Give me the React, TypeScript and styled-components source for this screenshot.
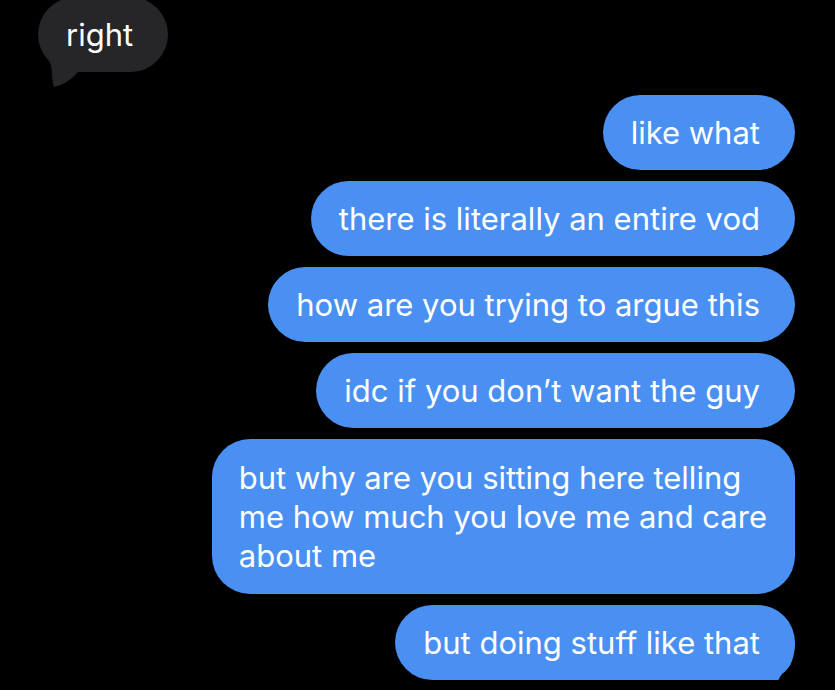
import styled, { createGlobalStyle } from 'styled-components';

const GlobalStyle = createGlobalStyle`
  html, body {
    margin: 0;
    padding: 0;
    background: #000;
    overflow: hidden;
  }
  body {
    font-family: Inter, "Noto Sans", sans-serif;
  }
`;

const BLUE = '#4a8ff2';
const GRAY = '#262628';

const sent = [
  ['like what'],
  ['there is literally an entire vod'],
  ['how are you trying to argue this'],
  ['idc if you don\u2019t want the guy'],
  ['but why are you sitting here telling', 'me how much you love me and care', 'about me'],
  ['but doing stuff like that'],
];

const App = () => {
  return (
    <>
      <GlobalStyle />
      <Thread>
        <ReceivedRow>
          <Bubble $kind="received" $multi={false}>
            <Text>right</Text>
            <ReceivedTail width="50" height="95" viewBox="0 0 50 95">
              <path
                d="M6 46 C9 58 14 68 14 76 C14 82 15 87 16 90 C25 88 33 83 40 75 L30 60 Z"
                fill={GRAY}
              />
            </ReceivedTail>
          </Bubble>
        </ReceivedRow>
        <SentGroup>
          {sent.map((lines, i) => (
            <Bubble key={i} $kind="sent" $multi={lines.length > 1}>
              <Text>
                {lines.map((l, j) => (
                  <span key={j}>
                    {l}
                    {j < lines.length - 1 && <br />}
                  </span>
                ))}
              </Text>
              {i === sent.length - 1 && (
                <SentTail width="55" height="70" viewBox="0 0 55 70">
                  <path
                    d="M20 1 L55 1 C55 17 51 28 42 34 C37 40 36 47 38 56 L32 61 C26 53 20 45 8 41 L0 41 Z"
                    fill={BLUE}
                  />
                </SentTail>
              )}
            </Bubble>
          ))}
        </SentGroup>
      </Thread>
    </>
  );
};

const Thread = styled.div`
  display: flex;
  flex-direction: column;
  padding: 0 40px 0 38px;
  gap: 23px;
`;

const ReceivedRow = styled.div`
  display: flex;
  justify-content: flex-start;
  margin-top: -3px;
`;

const SentGroup = styled.div`
  display: flex;
  flex-direction: column;
  align-items: flex-end;
  gap: 11px;
`;

const Bubble = styled.div<{ $kind: 'sent' | 'received'; $multi: boolean }>`
  position: relative;
  padding: ${({ $multi }) => ($multi ? '19px 28px 19px 27px' : '18px 35px 18px 28px')};
  border-radius: 38px;
  font-size: 31px;
  line-height: 39px;
  color: #fff;
  background: ${({ $kind }) => ($kind === 'sent' ? BLUE : GRAY)};
  white-space: nowrap;
`;

const Text = styled.span`
  position: relative;
  z-index: 1;
`;

const ReceivedTail = styled.svg`
  position: absolute;
  left: 0;
  top: 0;
  overflow: visible;
`;

const SentTail = styled.svg`
  position: absolute;
  right: 0;
  bottom: -30px;
  overflow: visible;
`;

export default App;
